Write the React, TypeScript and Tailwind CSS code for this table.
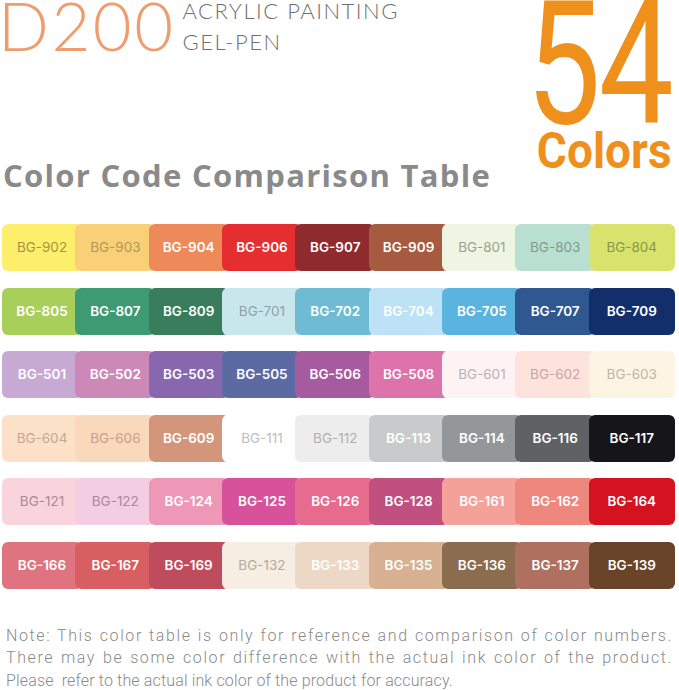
type Swatch = { code: string; bg: string; fg: string; light?: boolean };

const rows: Swatch[][] = [
  [
    { code: 'BG-902', bg: 'bg-[#fdee6c]', fg: 'text-[#a39442]', light: true },
    { code: 'BG-903', bg: 'bg-[#f9d077]', fg: 'text-[#b4975a]', light: true },
    { code: 'BG-904', bg: 'bg-[#ee8a5a]', fg: 'text-white' },
    { code: 'BG-906', bg: 'bg-[#e42e30]', fg: 'text-white' },
    { code: 'BG-907', bg: 'bg-[#8f2a2f]', fg: 'text-white' },
    { code: 'BG-909', bg: 'bg-[#a65a40]', fg: 'text-white' },
    { code: 'BG-801', bg: 'bg-[#eef5e2]', fg: 'text-[#98a38e]', light: true },
    { code: 'BG-803', bg: 'bg-[#b8dfcf]', fg: 'text-[#7f9c91]', light: true },
    { code: 'BG-804', bg: 'bg-[#d7e36d]', fg: 'text-[#8c9649]', light: true },
  ],
  [
    { code: 'BG-805', bg: 'bg-[#a8cf5a]', fg: 'text-white' },
    { code: 'BG-807', bg: 'bg-[#3e9a73]', fg: 'text-white' },
    { code: 'BG-809', bg: 'bg-[#3a7d5c]', fg: 'text-white' },
    { code: 'BG-701', bg: 'bg-[#c8e7ec]', fg: 'text-[#8ea2a7]', light: true },
    { code: 'BG-702', bg: 'bg-[#6ebbd3]', fg: 'text-white' },
    { code: 'BG-704', bg: 'bg-[#bde2f6]', fg: 'text-white' },
    { code: 'BG-705', bg: 'bg-[#5bb3df]', fg: 'text-white' },
    { code: 'BG-707', bg: 'bg-[#2f5790]', fg: 'text-white' },
    { code: 'BG-709', bg: 'bg-[#132f6b]', fg: 'text-white' },
  ],
  [
    { code: 'BG-501', bg: 'bg-[#c6aad3]', fg: 'text-white' },
    { code: 'BG-502', bg: 'bg-[#cc89b8]', fg: 'text-white' },
    { code: 'BG-503', bg: 'bg-[#8867ae]', fg: 'text-white' },
    { code: 'BG-505', bg: 'bg-[#5c6aa4]', fg: 'text-white' },
    { code: 'BG-506', bg: 'bg-[#a75b9f]', fg: 'text-white' },
    { code: 'BG-508', bg: 'bg-[#de73ab]', fg: 'text-white' },
    { code: 'BG-601', bg: 'bg-[#fef2f2]', fg: 'text-[#bcb1b1]', light: true },
    { code: 'BG-602', bg: 'bg-[#fde3dc]', fg: 'text-[#c0a9a1]', light: true },
    { code: 'BG-603', bg: 'bg-[#fef4e4]', fg: 'text-[#c0b5a6]', light: true },
  ],
  [
    { code: 'BG-604', bg: 'bg-[#fce0c8]', fg: 'text-[#c4a890]', light: true },
    { code: 'BG-606', bg: 'bg-[#f9d8bc]', fg: 'text-[#c2a288]', light: true },
    { code: 'BG-609', bg: 'bg-[#d3967a]', fg: 'text-white' },
    { code: 'BG-111', bg: 'bg-white', fg: 'text-[#bdbdbd]', light: true },
    { code: 'BG-112', bg: 'bg-[#ededed]', fg: 'text-[#b0b0b0]', light: true },
    { code: 'BG-113', bg: 'bg-[#c9cacc]', fg: 'text-white' },
    { code: 'BG-114', bg: 'bg-[#939799]', fg: 'text-white' },
    { code: 'BG-116', bg: 'bg-[#5f6264]', fg: 'text-white' },
    { code: 'BG-117', bg: 'bg-[#16161a]', fg: 'text-white' },
  ],
  [
    { code: 'BG-121', bg: 'bg-[#f9d4dc]', fg: 'text-[#a98b92]', light: true },
    { code: 'BG-122', bg: 'bg-[#f3cde2]', fg: 'text-[#a98b9b]', light: true },
    { code: 'BG-124', bg: 'bg-[#ee98b8]', fg: 'text-white' },
    { code: 'BG-125', bg: 'bg-[#d7529a]', fg: 'text-white' },
    { code: 'BG-126', bg: 'bg-[#e76b8e]', fg: 'text-white' },
    { code: 'BG-128', bg: 'bg-[#bf5080]', fg: 'text-white' },
    { code: 'BG-161', bg: 'bg-[#f4a19a]', fg: 'text-white' },
    { code: 'BG-162', bg: 'bg-[#ee877e]', fg: 'text-white' },
    { code: 'BG-164', bg: 'bg-[#d51220]', fg: 'text-white' },
  ],
  [
    { code: 'BG-166', bg: 'bg-[#df7480]', fg: 'text-white' },
    { code: 'BG-167', bg: 'bg-[#d75f62]', fg: 'text-white' },
    { code: 'BG-169', bg: 'bg-[#bf4c5c]', fg: 'text-white' },
    { code: 'BG-132', bg: 'bg-[#f6eee2]', fg: 'text-[#b5aa9e]', light: true },
    { code: 'BG-133', bg: 'bg-[#edd8c6]', fg: 'text-white' },
    { code: 'BG-135', bg: 'bg-[#d8b092]', fg: 'text-white' },
    { code: 'BG-136', bg: 'bg-[#8c6c4e]', fg: 'text-white' },
    { code: 'BG-137', bg: 'bg-[#af7060]', fg: 'text-white' },
    { code: 'BG-139', bg: 'bg-[#6a4428]', fg: 'text-white' },
  ],
];

const App = () => {
  return (
    <div className="w-[679px] h-[690px] bg-white overflow-hidden font-['Roboto',sans-serif]">
      {/* header */}
      <div className="flex h-[200px]">
        <div className="flex-1 flex flex-col">
          <div className="flex items-start">
            <div className="font-['Lato',sans-serif] font-light text-[67px] leading-[50px] text-[#ee9d6f] -ml-[2px] tracking-[2.5px]">
              D200
            </div>
            <div className="ml-[7px] font-['Lato',sans-serif] font-light text-[22px] leading-[22px] tracking-[1.5px] text-[#707070]">
              <div>ACRYLIC PAINTING</div>
              <div className="mt-[8.5px]">GEL-PEN</div>
            </div>
          </div>
          <h1 className="mt-auto mb-[5px] pl-[3px] font-['Open_Sans',sans-serif] font-bold text-[31px] leading-[40px] tracking-[1.3px] text-[#8a8a8a]">
            Color Code Comparison Table
          </h1>
        </div>
        <div className="w-[160px] flex flex-col items-center">
          <div className="font-['Roboto',sans-serif] font-normal text-[172px] leading-[129px] text-[#f0901c] scale-x-[0.776] tracking-[-3px]">
            54
          </div>
          <div className="ml-[10px] -mt-[0px] font-['Roboto',sans-serif] font-bold text-[50px] leading-[44px] text-[#f0901c] scale-x-[0.92]">
            Colors
          </div>
        </div>
      </div>

      {/* swatches */}
      <div className="mt-[24px] pl-[2px] pr-[4px] flex flex-col gap-[16.5px]">
        {rows.map((row, r) => (
          <div key={r} className="flex h-[47px]">
            {row.map((s, i) => (
              <div
                key={s.code}
                className={`${s.bg} ${s.fg} ${
                  i === row.length - 1 ? 'flex-1' : 'w-[80px] shrink-0 -mr-[6.7px]'
                } relative rounded-[6px] flex items-center justify-center font-['Inter',sans-serif] text-[13.5px] ${
                  s.light ? 'font-normal' : 'font-semibold'
                }`}
              >
                {s.code}
              </div>
            ))}
          </div>
        ))}
      </div>

      {/* note */}
      <div className="mt-[36px] px-[6px] font-['Roboto',sans-serif] font-light text-[16px] leading-[22.5px] text-[#8a8a8a] whitespace-nowrap">
        <div className="text-justify [text-align-last:justify] tracking-[1.6px]">
          Note: This color table is only for reference and comparison of color numbers.
        </div>
        <div className="text-justify [text-align-last:justify] tracking-[1.6px]">
          There may be some color difference with the actual ink color of the product.
        </div>
        <div className="tracking-[0.15px]">Please&nbsp; refer to the actual ink color of the product for accuracy.</div>
      </div>
    </div>
  );
};

export default App;
